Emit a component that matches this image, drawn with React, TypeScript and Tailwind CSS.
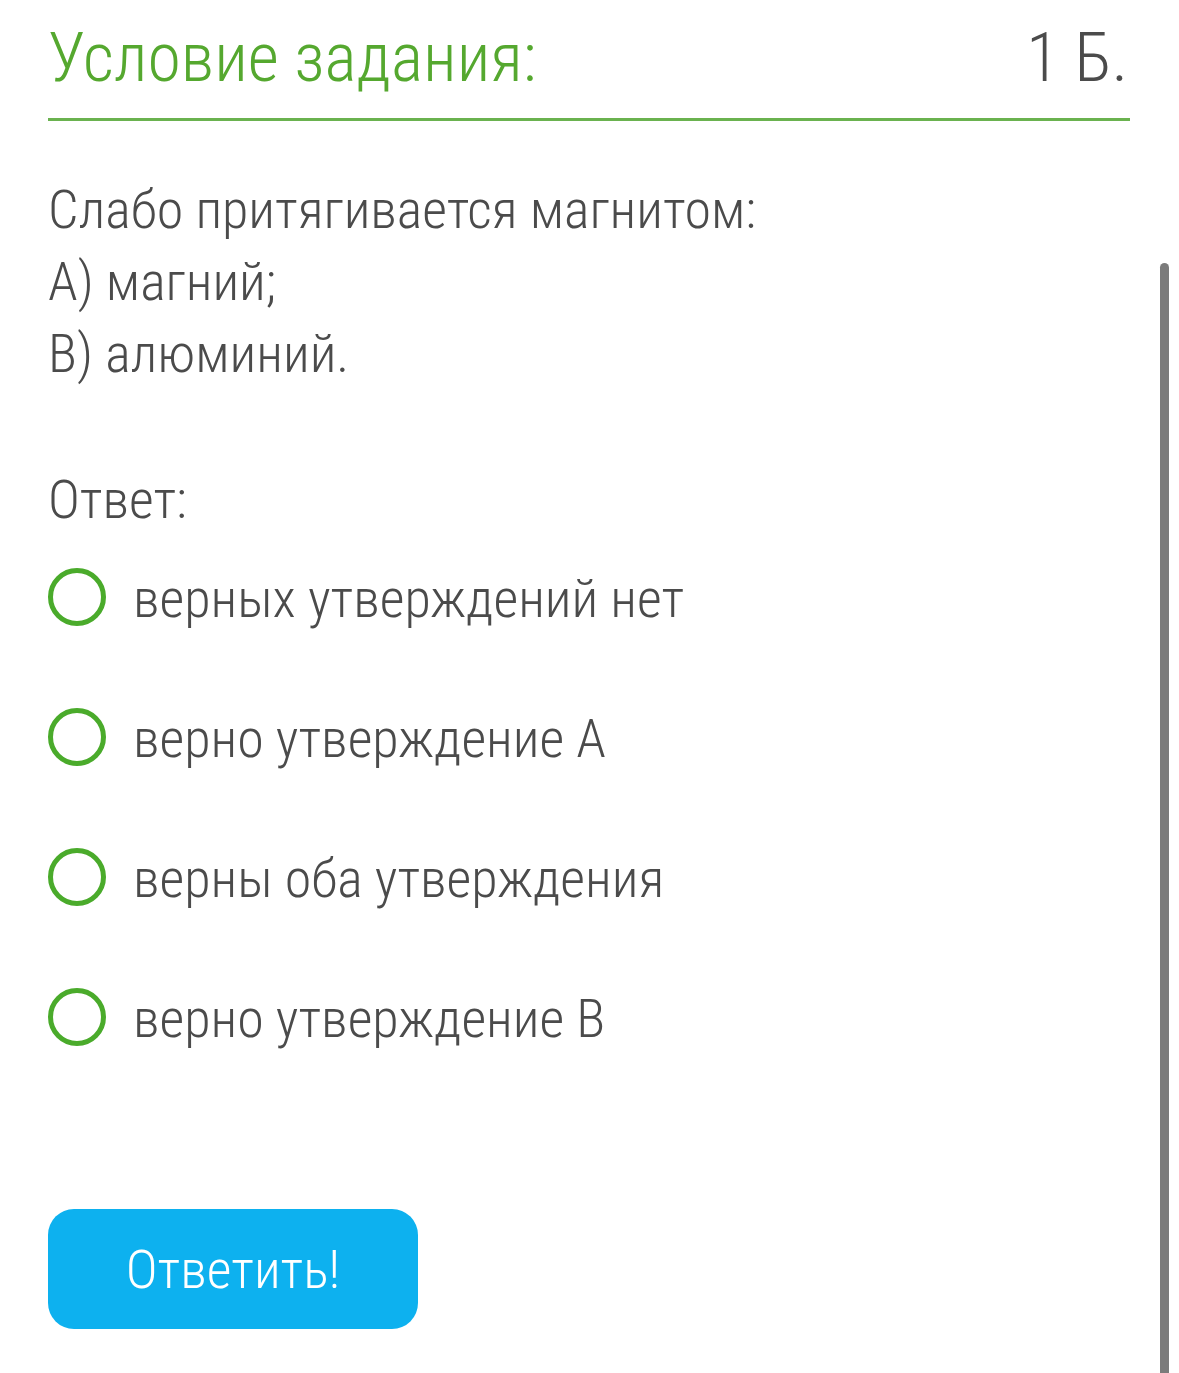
const options = [
  "верных утверждений нет",
  "верно утверждение А",
  "верны оба утверждения",
  "верно утверждение В",
];

export default function App() {
  return (
    <div className="relative w-[1179px] h-[1373px] overflow-hidden bg-white font-light text-[#4b4b4b] font-['Roboto_Condensed','Roboto',sans-serif]">
      <div className="w-[1130px] pl-[48px] pt-[24px]">
        <div className="flex items-baseline justify-between border-b-[3px] border-[#6ab24f] pb-[26px]">
          <div className="text-[68px] leading-none text-[#55a82f]">Условие задания:</div>
          <div className="text-[68px] leading-none text-[#4b4b4b] pr-[2px]">1 Б.</div>
        </div>

        <div className="mt-[53px] text-[54px] leading-[72px]">
          <div>Слабо притягивается магнитом:</div>
          <div>А) магний;</div>
          <div>В) алюминий.</div>
        </div>

        <div className="mt-[74px] text-[54px] leading-[72px]">Ответ:</div>

        <div className="mt-[27px] flex flex-col gap-[68px]">
          {options.map((o) => (
            <label key={o} className="flex items-center h-[72px] cursor-pointer">
              <span className="block w-[58px] h-[58px] shrink-0 rounded-full border-[5px] border-[#4aab2b] -mt-[5px]" />
              <span className="ml-[27px] text-[54px] leading-[72px]">{o}</span>
            </label>
          ))}
        </div>

        <button className="mt-[154px] flex w-[370px] h-[120px] items-center justify-center rounded-[26px] bg-[#0db1ef] text-[54px] font-light text-white">
          Ответить!
        </button>
      </div>

      <div className="absolute left-[1160px] top-[263px] w-[9px] h-[1120px] rounded-t-full bg-[#7b7b7b]" />
    </div>
  );
}
